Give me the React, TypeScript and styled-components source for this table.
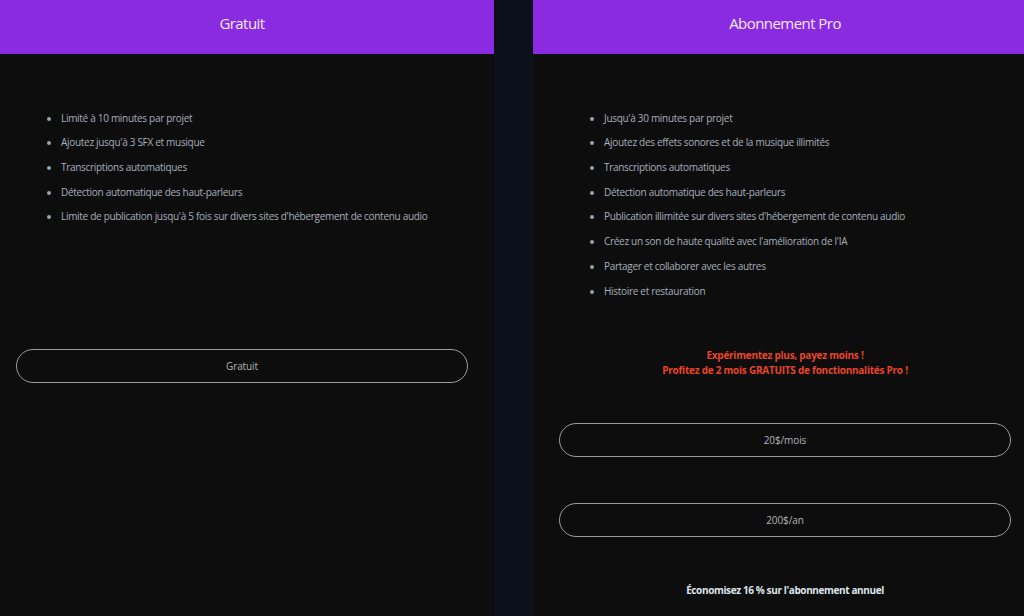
import React from "react";
import styled, { createGlobalStyle } from "styled-components";

const GlobalStyle = createGlobalStyle`
  html, body {
    margin: 0;
    padding: 0;
    background: #0c101a;
    overflow: hidden;
  }
  body {
    font-family: "Open Sans", "Noto Sans", "Liberation Sans", sans-serif;
  }
`;

const Page = styled.div`
  display: flex;
  gap: 39px;
  margin-left: -10px;
  width: 1047px;
  height: 616px;
  background: #0c101a;
`;

const Card = styled.section`
  width: 504px;
  flex: 0 0 504px;
  height: 616px;
  background: #0d0d0d;
  display: flex;
  flex-direction: column;
  align-items: stretch;
`;

const Header = styled.header`
  height: 54px;
  background: #8a2be2;
  display: flex;
  align-items: center;
  justify-content: center;
  padding-bottom: 8px;
  box-sizing: border-box;
  color: #f3eaff;
  font-size: 15px;
  letter-spacing: -0.55px;
`;

const Features = styled.ul`
  margin: 51.6px 0 0;
  padding: 0 0 0 71px;
  list-style: disc;
  color: #a8aebb;
  font-size: 10px;
  line-height: 24.7px;
  letter-spacing: -0.3px;
  li::marker {
    color: #9aa0ab;
    font-size: 10px;
  }
`;

const PillButton = styled.button<{ $top: number }>`
  margin: ${(p) => p.$top}px 26px 0;
  height: 34px;
  border-radius: 17px;
  border: 1px solid #9c9c9c;
  background: transparent;
  color: #b4b4b4;
  font-family: inherit;
  font-size: 10px;
  letter-spacing: -0.1px;
  cursor: pointer;
  padding: 0;
`;

const Promo = styled.p`
  margin: 45px 0 0;
  text-align: center;
  color: #e8452b;
  font-weight: 700;
  font-size: 10px;
  line-height: 15px;
  letter-spacing: -0.25px;
`;

const Savings = styled.p`
  margin: 46.5px 0 0;
  text-align: center;
  color: #dfe4ea;
  font-weight: 700;
  font-size: 10px;
  line-height: 15px;
  letter-spacing: -0.38px;
`;

const freeFeatures = [
  "Limité à 10 minutes par projet",
  "Ajoutez jusqu'à 3 SFX et musique",
  "Transcriptions automatiques",
  "Détection automatique des haut-parleurs",
  "Limite de publication jusqu'à 5 fois sur divers sites d'hébergement de contenu audio",
];

const proFeatures = [
  "Jusqu'à 30 minutes par projet",
  "Ajoutez des effets sonores et de la musique illimités",
  "Transcriptions automatiques",
  "Détection automatique des haut-parleurs",
  "Publication illimitée sur divers sites d'hébergement de contenu audio",
  "Créez un son de haute qualité avec l'amélioration de l'IA",
  "Partager et collaborer avec les autres",
  "Histoire et restauration",
];

export default function App() {
  return (
    <>
      <GlobalStyle />
      <Page>
        <Card>
          <Header>Gratuit</Header>
          <Features>
            {freeFeatures.map((f) => (
              <li key={f}>{f}</li>
            ))}
          </Features>
          <PillButton $top={119.6}>Gratuit</PillButton>
        </Card>
        <Card>
          <Header>Abonnement Pro</Header>
          <Features>
            {proFeatures.map((f) => (
              <li key={f}>{f}</li>
            ))}
          </Features>
          <Promo>
            Expérimentez plus, payez moins !
            <br />
            Profitez de 2 mois GRATUITS de fonctionnalités Pro !
          </Promo>
          <PillButton $top={44.5}>20$/mois</PillButton>
          <PillButton $top={46}>200$/an</PillButton>
          <Savings>Économisez 16 % sur l'abonnement annuel</Savings>
        </Card>
      </Page>
    </>
  );
}
